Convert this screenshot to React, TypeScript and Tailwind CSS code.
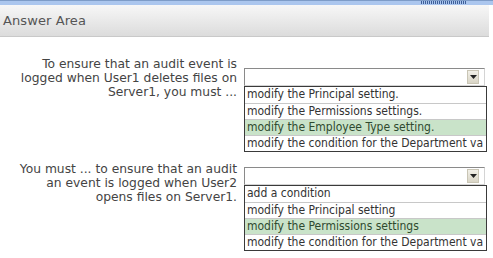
import React from 'react'

const questions = [
    {
        lines: ['To ensure that an audit event is', 'logged when User1 deletes files on', 'Server1, you must ...'],
        offset: 'mt-[11px]',
        options: [
            'modify the Principal setting.',
            'modify the Permissions settings.',
            'modify the Employee Type setting.',
            'modify the condition for the Department va',
        ],
        picked: 2,
    },
    {
        lines: ['You must ... to ensure that an audit', 'an event is logged when User2', 'opens files on Server1.'],
        offset: 'mt-[5px]',
        options: [
            'add a condition',
            'modify the Principal setting',
            'modify the Permissions settings',
            'modify the condition for the Department va',
        ],
        picked: 2,
    },
]

function Dropdown({ options, picked }: { options: string[], picked: number }) {
    return (
        <div className="flex flex-col">
            {/* closed select box */}
            <div className="h-[18px] w-[241px] bg-white border border-t-[#8a8a8a] border-l-[#8a8a8a] border-r-[#d4d4d4] border-b-[#d4d4d4] flex items-center justify-end pr-[5px]">
                <div className="w-[12px] h-[14px] bg-gradient-to-b from-[#f2f0e8] to-[#d9d5c6] border border-[#c9c5b5] flex items-center justify-center">
                    <svg width="7" height="4" viewBox="0 0 7 4"><path d="M0 0h7L3.5 4z" fill="#222" /></svg>
                </div>
            </div>
            {/* open list */}
            <div className="w-[243px] border border-[#3a3a3a] bg-white">
                {options.map((o, i) => (
                    <div
                        key={o}
                        className={`h-[16px] px-[2px] leading-[15px] text-[12px] whitespace-nowrap ${i > 0 ? 'border-t border-[#c8c8c8]' : ''} ${i === picked ? 'bg-[#c9e3c9] text-[#2f4a2f]' : 'text-[#333]'}`}
                        style={{ fontFamily: 'Tahoma, "DejaVu Sans Condensed", "Liberation Sans", sans-serif' }}
                    >
                        {o}
                    </div>
                ))}
            </div>
        </div>
    )
}

export default function App() {
    return (
        <div className="w-[493px] h-[258px] bg-white overflow-hidden flex flex-col" style={{ fontFamily: '"DejaVu Sans", Verdana, sans-serif' }}>
            {/* top strip */}
            <div className="h-[5px] bg-[#abc6ee] border-t border-[#7e9cc8] flex justify-end pr-[26px]">
                <div className="w-[46px] h-[3px] bg-[repeating-linear-gradient(90deg,#3d5f9a_0_1px,transparent_1px_2px)]" />
            </div>

            {/* header */}
            <div className="flex">
                <div className="w-[489px] h-[32px] bg-gradient-to-b from-[#f7f7f7] to-[#dcdcdc] border-b border-[#c9c9c9] flex items-center pl-[3px]">
                    <span className="text-[13px] text-[#555] tracking-[0.1px]">Answer Area</span>
                </div>
            </div>

            {/* questions */}
            <div className="flex flex-col gap-[10px] pt-[20px]">
                {questions.map((q) => (
                    <div key={q.lines[0]} className="flex items-start">
                        <div className="w-[237px] text-right text-[12.3px] leading-[14px] text-[#444]">
                            {q.lines.map((l) => (
                                <div key={l}>{l}</div>
                            ))}
                        </div>
                        <div className={`ml-[7px] ${q.offset}`}>
                            <Dropdown options={q.options} picked={q.picked} />
                        </div>
                    </div>
                ))}
            </div>
        </div>
    )
}
